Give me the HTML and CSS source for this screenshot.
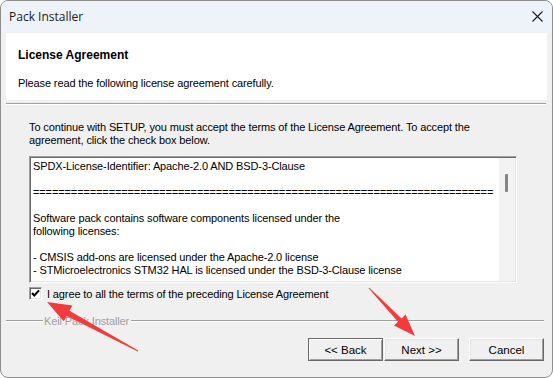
FILE: index.html
```html
<!DOCTYPE html>
<html>
<head>
<meta charset="utf-8">
<title>Pack Installer</title>
<link rel="stylesheet" href="styles.css">
</head>
<body>
<div class="window">
  <div class="titlebar">
    <span class="title">Pack Installer</span>
    <svg class="close" width="11" height="11" viewBox="0 0 11 11"><path d="M0.5 0.5 L10.5 10.5 M10.5 0.5 L0.5 10.5" stroke="#1a1a1a" stroke-width="1.1" fill="none"/></svg>
  </div>
  <div class="header">
    <div class="h-title">License Agreement</div>
    <div class="h-sub">Please read the following license agreement carefully.</div>
  </div>
  <div class="sep"></div>
  <div class="content">
    <p class="intro">To continue with SETUP, you must accept the terms of the License Agreement. To accept the agreement, click the check box below.</p>
    <div class="listbox">
      <div class="lic-text">SPDX-License-Identifier: Apache-2.0 AND BSD-3-Clause

=========================================================================

Software pack contains software components licensed under the
following licenses:

- CMSIS add-ons are licensed under the Apache-2.0 license
- STMicroelectronics STM32 HAL is licensed under the BSD-3-Clause license</div>
      <div class="scroll"><div class="thumb"></div></div>
    </div>
    <label class="agree">
      <span class="cb"><svg width="11" height="11" viewBox="0 0 11 11"><path d="M2 5 L4.3 7.5 L9 2.3" stroke="#000" stroke-width="2" fill="none"/></svg></span>
      <span>I agree to all the terms of the preceding License Agreement</span>
    </label>
  </div>
  <div class="group">
    <span class="gline first"></span>
    <span class="glabel">Keil Pack Installer</span>
    <span class="gline"></span>
  </div>
  <div class="buttons">
    <button class="btn default">&lt;&lt; Back</button>
    <button class="btn">Next &gt;&gt;</button>
    <button class="btn cancel">Cancel</button>
  </div>
</div>
<svg class="arrows" width="553" height="378" viewBox="0 0 553 378">
  <polygon fill="#f23c3c" points="47,302 72.4,305.5 69.5,310.8 138.2,350.6 137.8,351.4 66.7,316 63.8,321.3"/>
  <polygon fill="#f23c3c" points="415,336 405.6,314.6 401.6,318.4 369.4,287.7 368.6,288.3 398,321.8 394,325.6"/>
</svg>
</body>
</html>
```
FILE: styles.css
```css
html, body {
  margin: 0;
  padding: 0;
  background: #ffffff;
}
body {
  position: relative;
  width: 553px;
  height: 378px;
  overflow: hidden;
}
.window {
  box-sizing: border-box;
  width: 553px;
  height: 378px;
  border: 1px solid #8e8e8e;
  border-radius: 8px;
  background: #f0f0f0;
  overflow: hidden;
  display: flex;
  flex-direction: column;
  font-family: "Liberation Sans", Arial, sans-serif;
  font-size: 11px;
  letter-spacing: -0.12px;
  color: #000;
}
.titlebar {
  height: 31px;
  flex: none;
  background: #eef2f9;
  display: flex;
  align-items: center;
  justify-content: space-between;
  padding: 0 9px 0 8px;
}
.title {
  font-family: "Open Sans", "Noto Sans", sans-serif;
  font-size: 12px;
  letter-spacing: 0;
  color: #1b1b1b;
}
.close {
  display: block;
  margin-top: -1px;
}
.header {
  flex: none;
  height: 67px;
  margin: 1px 5px 0 5px;
  background: #ffffff;
  box-sizing: border-box;
  padding: 15px 12px 0 12px;
}
.h-title {
  font-weight: bold;
  font-size: 12px;
  letter-spacing: 0;
  line-height: 14px;
}
.h-sub {
  margin-top: 14px;
  line-height: 14px;
}
.sep {
  flex: none;
  margin: 3px 6px 0 5px;
  border-top: 1px solid #a0a0a0;
  border-bottom: 1px solid #ffffff;
}
.content {
  padding: 0 0 0 28px;
}
.intro {
  margin: 16px 0 0 0;
  line-height: 13px;
  width: 470px;
}
.listbox {
  margin-top: 9px;
  width: 488px;
  height: 127px;
  box-sizing: border-box;
  background: #ffffff;
  border: 1px solid;
  border-color: #a0a0a0 #ffffff #ffffff #a0a0a0;
  box-shadow: inset 1px 1px 0 #696969, inset -1px -1px 0 #e3e3e3;
  display: flex;
}
.lic-text {
  flex: 1;
  white-space: pre;
  line-height: 13px;
  padding: 3px 0 0 3px;
  overflow: hidden;
}
.scroll {
  width: 16px;
  flex: none;
  background: #f3f3f3;
  margin: 1px 1px 1px 0;
  position: relative;
}
.thumb {
  width: 3px;
  height: 18px;
  background: #858585;
  margin: 16px 0 0 6px;
  border-radius: 1px;
}
.agree {
  display: flex;
  align-items: center;
  gap: 5px;
  margin-top: 4px;
  height: 13px;
}
.cb {
  width: 13px;
  height: 13px;
  box-sizing: border-box;
  background: #fff;
  border: 1px solid;
  border-color: #a0a0a0 #ffffff #ffffff #a0a0a0;
  box-shadow: inset 1px 1px 0 #696969, inset -1px -1px 0 #e3e3e3;
  display: flex;
  align-items: center;
  justify-content: center;
}
.cb svg {
  display: block;
}
.group {
  display: flex;
  align-items: center;
  margin: 14px 8px 0 5px;
  height: 13px;
}
.gline {
  flex: 1;
  border-top: 1px solid #a0a0a0;
  border-bottom: 1px solid #ffffff;
}
.gline.first {
  flex: none;
  width: 37px;
}
.glabel {
  color: #a0a0a0;
  padding: 0 2px 0 1px;
}
.buttons {
  display: flex;
  justify-content: flex-end;
  margin: 11px 8px 0 0;
}
.btn {
  width: 75px;
  height: 23px;
  box-sizing: border-box;
  font-family: "Liberation Sans", Arial, sans-serif;
  font-size: 11.5px;
  color: #000;
  background: #f0f0f0;
  border: 1px solid;
  border-color: #ffffff #696969 #696969 #ffffff;
  box-shadow: inset -1px -1px 0 #a0a0a0, inset 1px 1px 0 #e3e3e3;
  padding: 0;
  margin-left: 1px;
}
.btn.default {
  border-color: #696969 #696969 #696969 #696969;
  box-shadow: inset 1px 1px 0 #ffffff, inset -1px -1px 0 #a0a0a0;
}
.btn.cancel {
  margin-left: 10px;
}
.arrows {
  position: absolute;
  left: 0;
  top: 0;
  pointer-events: none;
}
```
